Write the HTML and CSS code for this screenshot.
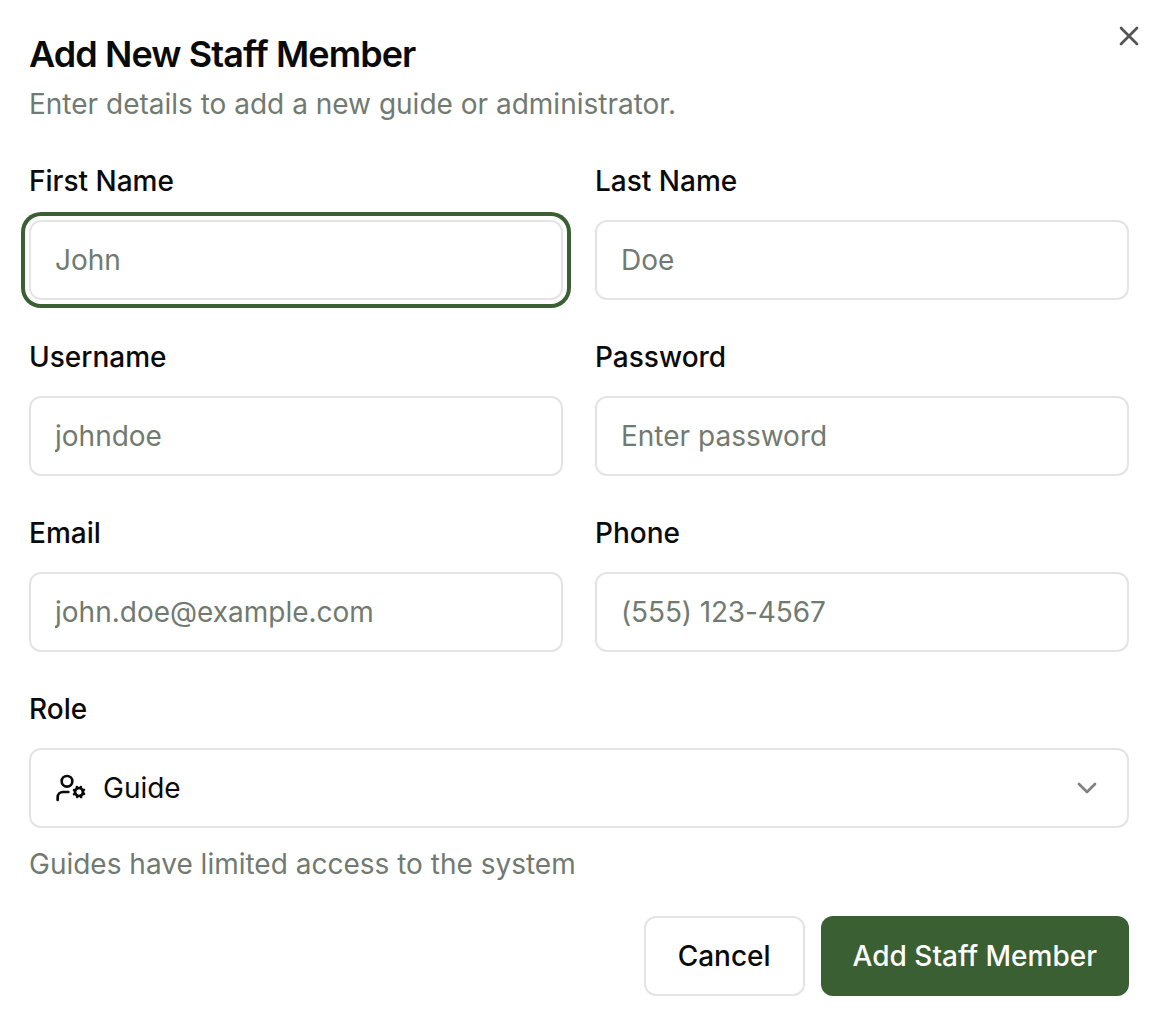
FILE: index.html
```html
<!DOCTYPE html>
<html lang="en">
<head>
<meta charset="utf-8">
<title>Add New Staff Member</title>
<link rel="stylesheet" href="styles.css">
</head>
<body>
<main class="dialog">
  <button class="close" type="button" aria-label="Close">
    <svg viewBox="0 0 24 24" width="32" height="32"><path d="M18 6 6 18M6 6l12 12"/></svg>
  </button>
  <header class="header">
    <h1 class="title">Add New Staff Member</h1>
    <p class="description">Enter details to add a new guide or administrator.</p>
  </header>
  <form class="form">
    <div class="grid">
      <div class="field"><label class="label" for="first">First Name</label><input class="input focused" id="first" placeholder="John"></div>
      <div class="field"><label class="label" for="last">Last Name</label><input class="input" id="last" placeholder="Doe"></div>
      <div class="field"><label class="label" for="user">Username</label><input class="input" id="user" placeholder="johndoe"></div>
      <div class="field"><label class="label" for="pass">Password</label><input class="input" id="pass" type="password" placeholder="Enter password"></div>
      <div class="field"><label class="label" for="email">Email</label><input class="input" id="email" type="email" placeholder="john.doe@example.com"></div>
      <div class="field"><label class="label" for="phone">Phone</label><input class="input phone" id="phone" placeholder="(555) 123-4567"></div>
    </div>
    <div class="field role">
      <span class="label">Role</span>
      <button class="select" type="button">
        <svg class="role-icon" viewBox="0 0 24 24" width="32" height="32"><circle cx="9" cy="7" r="4"/><path d="M10 15H6a4 4 0 0 0-4 4v2"/><circle cx="18" cy="15" r="3"/><path d="m21.7 16.4-.9-.3M15.2 13.9l-.9-.3M16.6 18.7l.3-.9M19.1 12.2l.3-.9M19.6 18.7l-.4-1M16.8 12.3l-.4-1M14.3 16.6l1-.4M20.7 13.8l1-.4"/></svg>
        <span class="value">Guide</span>
        <svg class="chevron" viewBox="0 0 24 24" width="32" height="32"><path d="m6 9 6 6 6-6"/></svg>
      </button>
      <p class="hint">Guides have limited access to the system</p>
    </div>
    <footer class="footer">
      <button class="button outline" type="button">Cancel</button>
      <button class="button primary" type="button">Add Staff Member</button>
    </footer>
  </form>
</main>
</body>
</html>
```
FILE: styles.css
```css
* { box-sizing: border-box; }
body { margin: 0; background: #fff; color: #0a0a0a; font-family: Inter, "Liberation Sans", sans-serif; font-size: 28px; line-height: 40px; }
button, input { font: inherit; color: inherit; margin: 0; letter-spacing: inherit; }
svg { display: block; fill: none; stroke: currentColor; stroke-width: 2; stroke-linecap: round; stroke-linejoin: round; }
.dialog { position: relative; width: 1152px; height: 1024px; padding: 36px 23px 0 29px; overflow: hidden; }
.close { position: absolute; top: 20px; right: 7px; padding: 0; border: 0; background: none; color: #545454; }
.title { margin: 0; font-size: 36px; line-height: 36px; font-weight: 600; letter-spacing: -0.9px; }
.description { margin: 12px 0 0; color: #717a70; }
.form { margin-top: 43px; }
.grid { display: grid; grid-template-columns: 534px 534px; column-gap: 32px; row-gap: 43px; }
.field { display: flex; flex-direction: column; }
.label { height: 28px; line-height: 28px; font-weight: 500; margin-bottom: 25px; }
.input { width: 100%; height: 80px; padding: 0 24px; border: 2px solid #e4e4e4; border-radius: 12px; background: #fff; outline: none; }
.input::placeholder { color: #717a70; opacity: 1; }
.phone { letter-spacing: -0.12px; }
.focused { box-shadow: 0 0 0 4px #fff, 0 0 0 8px #3a5f32; }
.role { width: 1100px; margin-top: 43px; }
.select { display: flex; align-items: center; width: 100%; height: 80px; padding: 0 24px; border: 2px solid #e4e4e4; border-radius: 12px; background: #fff; text-align: left; }
.value { margin-left: 16px; }
.chevron { margin-left: auto; color: #808080; }
.hint { margin: 16px 0 0; color: #717a70; }
.footer { display: flex; justify-content: flex-end; gap: 16px; width: 1100px; margin-top: 32px; }
.button { height: 80px; padding: 0 32px; border-radius: 12px; font-weight: 500; }
.outline { border: 2px solid #e4e4e4; background: #fff; }
.primary { border: 0; background: #3a5f32; color: #fff; }
```
